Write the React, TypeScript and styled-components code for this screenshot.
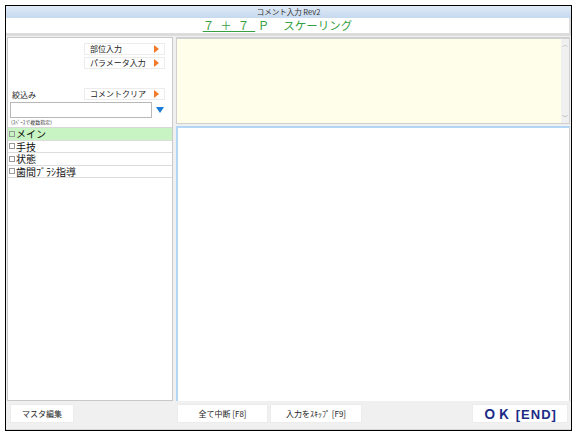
import React from 'react';
import styled, { createGlobalStyle } from 'styled-components';

const GlobalStyle = createGlobalStyle`
  html, body {
    margin: 0;
    padding: 0;
    background: #ffffff;
  }
  body {
    font-family: "Noto Sans CJK JP", "Noto Sans", sans-serif;
  }
`

const Window = styled.div`
  margin: 5px 0 0 5px;
  width: 567px;
  height: 426px;
  box-sizing: border-box;
  border: 1px solid #000;
  display: flex;
  flex-direction: column;
  background: #f0f0f0;
`

const TitleBar = styled.div`
  height: 12px;
  background: linear-gradient(#dfeaf6, #c6d9ee);
  font-size: 7.5px;
  line-height: 12px;
  color: #333;
  text-align: center;
`

const Header = styled.div`
  height: 15px;
  background: #fff;
  border-bottom: 3px solid #dcdcdc;
  border-right: 2px solid #dcdcdc;
  display: flex;
  justify-content: center;
  align-items: center;
  padding-right: 20px;
  color: #35a040;
  font-size: 11.5px;
  line-height: 15px;
  white-space: pre;
`

const Under = styled.span`
  text-decoration: underline;
  text-underline-offset: 1px;
  letter-spacing: 6px;
`

const Body = styled.div`
  flex: 1;
  display: flex;
  gap: 3px;
  padding: 1px 1px 0 1px;
  min-height: 0;
`

const LeftPanel = styled.div`
  width: 166px;
  box-sizing: border-box;
  border: 1px solid #c8c8c8;
  background: #fff;
  display: flex;
  flex-direction: column;
`

const ButtonArea = styled.div`
  display: grid;
  grid-template-columns: 1fr 81px;
  grid-template-rows: 12px 12px 15px 12px;
  row-gap: 2px;
  padding: 5px 7px 0 2px;
  align-items: center;
`

const SideButton = styled.div<{ $row: number }>`
  grid-column: 2;
  grid-row: ${({ $row }) => $row};
  height: 12px;
  box-sizing: border-box;
  border: 1px solid #ececec;
  font-size: 8px;
  line-height: 10px;
  padding: 0 5px;
  color: #222;
  display: flex;
  align-items: center;
  justify-content: space-between;
`

const Arrow = styled.span`
  width: 0;
  height: 0;
  border-top: 4px solid transparent;
  border-bottom: 4px solid transparent;
  border-left: 5px solid #f07a2a;
`

const FilterLabel = styled.div`
  grid-column: 1;
  grid-row: 4;
  font-size: 8px;
  padding-left: 2px;
  align-self: end;
  color: #222;
`

const FilterRow = styled.div`
  display: flex;
  align-items: center;
  padding: 2px 0 0 2px;
  gap: 4px;
`

const FilterInput = styled.div`
  width: 142px;
  height: 16px;
  box-sizing: border-box;
  border: 1px solid #b8b8b8;
  background: #fff;
`

const DropArrow = styled.div`
  width: 0;
  height: 0;
  border-left: 4px solid transparent;
  border-right: 4px solid transparent;
  border-top: 6px solid #1a7ad8;
`

const Hint = styled.div`
  font-size: 5px;
  line-height: 8px;
  padding-left: 3px;
  color: #333;
  border-bottom: 1px solid #d8d8d8;
  height: 9px;
`

const ListRow = styled.div<{ $active?: boolean }>`
  height: 12.5px;
  box-sizing: border-box;
  display: flex;
  align-items: center;
  gap: 1px;
  border-bottom: 1px solid #dcdcdc;
  background: ${({ $active }) => ($active ? '#c8f4c4' : '#fff')};
  font-size: 10px;
  line-height: 11px;
  color: #111;
  padding-left: 1px;
`

const Check = styled.span`
  width: 4px;
  height: 4px;
  border: 1px solid #9a9a9a;
  flex: none;
`

const RightCol = styled.div`
  flex: 1;
  display: flex;
  flex-direction: column;
  gap: 2px;
`

const Memo = styled.div`
  height: 87px;
  box-sizing: border-box;
  border: 1px solid #d0d0d0;
  border-top-width: 2px;
  background: #fffeea;
  display: flex;
  justify-content: flex-end;
`

const ScrollBar = styled.div`
  width: 8px;
  background: #f0f0f0;
  display: flex;
  flex-direction: column;
  justify-content: space-between;
  align-items: center;
  padding: 2px 0;
  font-size: 6px;
  line-height: 6px;
  color: #a8a8a8;
`

const Editor = styled.div`
  flex: 1;
  background: #fff;
  border-top: 2px solid #b3d6f6;
  border-left: 2px solid #b3d6f6;
  border-right: 1px solid #d0d0d0;
`

const Footer = styled.div`
  height: 29px;
  box-sizing: border-box;
  display: flex;
  align-items: center;
  padding: 0 3px 3px 4px;
  border-bottom: 1px solid #d8d8d8;
`

const FootButton = styled.div<{ $w: number; $strong?: boolean }>`
  width: ${({ $w }) => $w}px;
  height: 19px;
  box-sizing: border-box;
  background: #fff;
  border: 1px solid #ececec;
  display: flex;
  align-items: center;
  justify-content: center;
  font-size: ${({ $strong }) => ($strong ? '13px' : '8px')};
  font-weight: ${({ $strong }) => ($strong ? 700 : 400)};
  color: ${({ $strong }) => ($strong ? '#1c2c86' : '#222')};
  font-family: ${({ $strong }) =>
    $strong ? '"Liberation Sans", "Noto Sans CJK JP", sans-serif' : 'inherit'};
  letter-spacing: ${({ $strong }) => ($strong ? '1px' : '0')};
`

const LeftFoot = styled.div`
  width: 166px;
  display: flex;
`

const RightFoot = styled.div`
  flex: 1;
  display: flex;
  gap: 2px;
  padding-left: 1px;
`

const Spacer = styled.div`
  flex: 1;
`

const items = ['メイン', '手技', '状態', '歯間ﾌﾞﾗｼ指導'];

const App: React.FC = () => {
  return (
    <>
      <GlobalStyle />
      <Window>
        <TitleBar>コメント入力 Rev2</TitleBar>
        <Header>
          <Under>７＋７</Under>{' Ｐ　 スケーリング'}
        </Header>
        <Body>
          <LeftPanel>
            <ButtonArea>
              <SideButton $row={1}>
                部位入力
                <Arrow />
              </SideButton>
              <SideButton $row={2}>
                パラメータ入力
                <Arrow />
              </SideButton>
              <FilterLabel>絞込み</FilterLabel>
              <SideButton $row={4}>
                コメントクリア
                <Arrow />
              </SideButton>
            </ButtonArea>
            <FilterRow>
              <FilterInput />
              <DropArrow />
            </FilterRow>
            <Hint>(ｽﾍﾟｰｽで複数指定)</Hint>
            {items.map((item, i) => (
              <ListRow key={item} $active={i === 0}>
                <Check />
                {item}
              </ListRow>
            ))}
          </LeftPanel>
          <RightCol>
            <Memo>
              <ScrollBar>
                <span>︿</span>
                <span>﹀</span>
              </ScrollBar>
            </Memo>
            <Editor />
          </RightCol>
        </Body>
        <Footer>
          <LeftFoot>
            <FootButton $w={64}>マスタ編集</FootButton>
          </LeftFoot>
          <RightFoot>
            <FootButton $w={91}>全て中断 [F8]</FootButton>
            <FootButton $w={92}>入力をｽｷｯﾌﾟ [F9]</FootButton>
            <Spacer />
            <FootButton $w={96} $strong>
              ＯＫ [END]
            </FootButton>
          </RightFoot>
        </Footer>
      </Window>
    </>
  );
};

export default App;
